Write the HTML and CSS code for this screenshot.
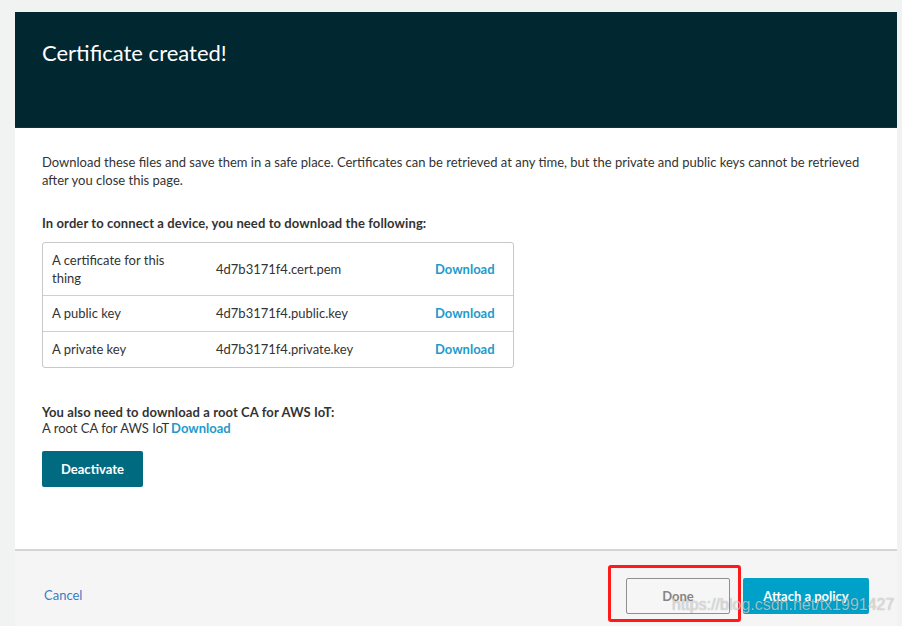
FILE: index.html
```html
<!DOCTYPE html>
<html lang="en">
<head>
<meta charset="utf-8">
<title>Certificate created!</title>
<link rel="stylesheet" href="styles.css">
</head>
<body>
<div class="modal">
  <header class="modal-header">
    <h1 class="title">Certificate created!</h1>
  </header>
  <main class="modal-body">
    <p class="intro">Download these files and save them in a safe place. Certificates can be retrieved at any time, but the private and public keys cannot be retrieved after you close this page.</p>
    <p class="heading">In order to connect a device, you need to download the following:</p>
    <div class="files">
      <div class="row">
        <div class="cell">A certificate for this thing</div>
        <div class="cell">4d7b3171f4.cert.pem</div>
        <div class="cell"><a class="link" href="#">Download</a></div>
      </div>
      <div class="row">
        <div class="cell">A public key</div>
        <div class="cell">4d7b3171f4.public.key</div>
        <div class="cell"><a class="link" href="#">Download</a></div>
      </div>
      <div class="row">
        <div class="cell">A private key</div>
        <div class="cell">4d7b3171f4.private.key</div>
        <div class="cell"><a class="link" href="#">Download</a></div>
      </div>
    </div>
    <p class="heading root-heading">You also need to download a root CA for AWS IoT:</p>
    <p class="root-line">A root CA for AWS IoT<a class="link root-link" href="#">Download</a></p>
    <button class="btn btn-dark">Deactivate</button>
  </main>
  <footer class="modal-footer">
    <a class="cancel" href="#">Cancel</a>
    <div class="actions">
      <button class="btn btn-default">Done</button>
      <button class="btn btn-primary">Attach a policy</button>
    </div>
  </footer>
</div>
<div class="annotation"></div>
<div class="watermark">https://blog.csdn.net/tx1991427</div>
</body>
</html>
```

FILE: styles.css
```css
* { box-sizing: border-box; }
html, body { margin: 0; padding: 0; }
body {
  background: #f1f2f2;
  font-family: Lato, "Open Sans", sans-serif;
  font-size: 13px;
  line-height: 18px;
  color: #333;
  width: 902px;
  height: 626px;
  overflow: hidden;
  position: relative;
}
.modal {
  margin: 12px 0 0 15px;
  width: 882px;
  height: 614px;
  display: flex;
  flex-direction: column;
  background: #fff;
}
.modal-header {
  background: #012730;
  height: 116px;
  border-bottom: 1px solid #0b3440;
  padding: 28px 27px 0;
}
.title {
  margin: 0;
  font-size: 22px;
  line-height: 26px;
  font-weight: 400;
  color: #fff;
}
.modal-body {
  flex: 0 0 423px;
  padding: 25px 27px 0;
  border-bottom: 2px solid #d5d5d5;
}
.intro { margin: 0 0 25px; }
.heading { margin: 0; font-weight: 700; color: #333; letter-spacing: 0.1px; }
.files {
  margin-top: 10px;
  width: 472px;
  border: 1px solid #c8c8c8;
  border-radius: 3px;
}
.row {
  display: grid;
  grid-template-columns: 164px 219px 1fr;
  border-top: 1px solid #d0d0d0;
}
.row:first-child { border-top: none; }
.cell {
  padding: 8px 9px 9px;
  display: flex;
  align-items: center;
}
.row:first-child .cell { padding: 8px 9px; }
.row:first-child .cell:first-child { padding-right: 40px; }
.link {
  color: #1d9bcb;
  font-weight: 700;
  text-decoration: none;
}
.root-link { margin-left: 2px; }
.root-heading { margin-top: 35px; }
.root-line { margin: -2px 0 14px; }
.btn {
  font-family: inherit;
  font-size: 13px;
  font-weight: 700;
  height: 36px;
  border-radius: 2px;
  cursor: pointer;
}
.btn-dark {
  width: 101px;
  background: #006b80;
  border: none;
  color: #fff;
}
.modal-footer {
  flex: 1;
  background: #f5f5f5;
  display: flex;
  align-items: flex-start;
  justify-content: space-between;
  padding: 27px 28px 0 29px;
}
.cancel {
  color: #3d7cc4;
  text-decoration: none;
  margin-top: 8px;
}
.actions { display: flex; gap: 13px; }
.btn-default {
  width: 104px;
  background: #f6f6f6;
  border: 1px solid #8f8f8f;
  color: #858585;
}
.btn-primary {
  width: 126px;
  background: #00a1c9;
  border: none;
  color: #fff;
}
.annotation {
  position: absolute;
  left: 608px;
  top: 565px;
  width: 133px;
  height: 57px;
  border: 3px solid #ff1a1a;
  border-radius: 3px;
}
.watermark {
  position: absolute;
  left: 672px;
  top: 596px;
  font-family: "Liberation Sans", Arial, sans-serif;
  font-size: 16px;
  line-height: 18px;
  color: rgba(255, 255, 255, 0.6);
  text-shadow: 0 0 1px rgba(0, 0, 0, 0.4);
}
```
